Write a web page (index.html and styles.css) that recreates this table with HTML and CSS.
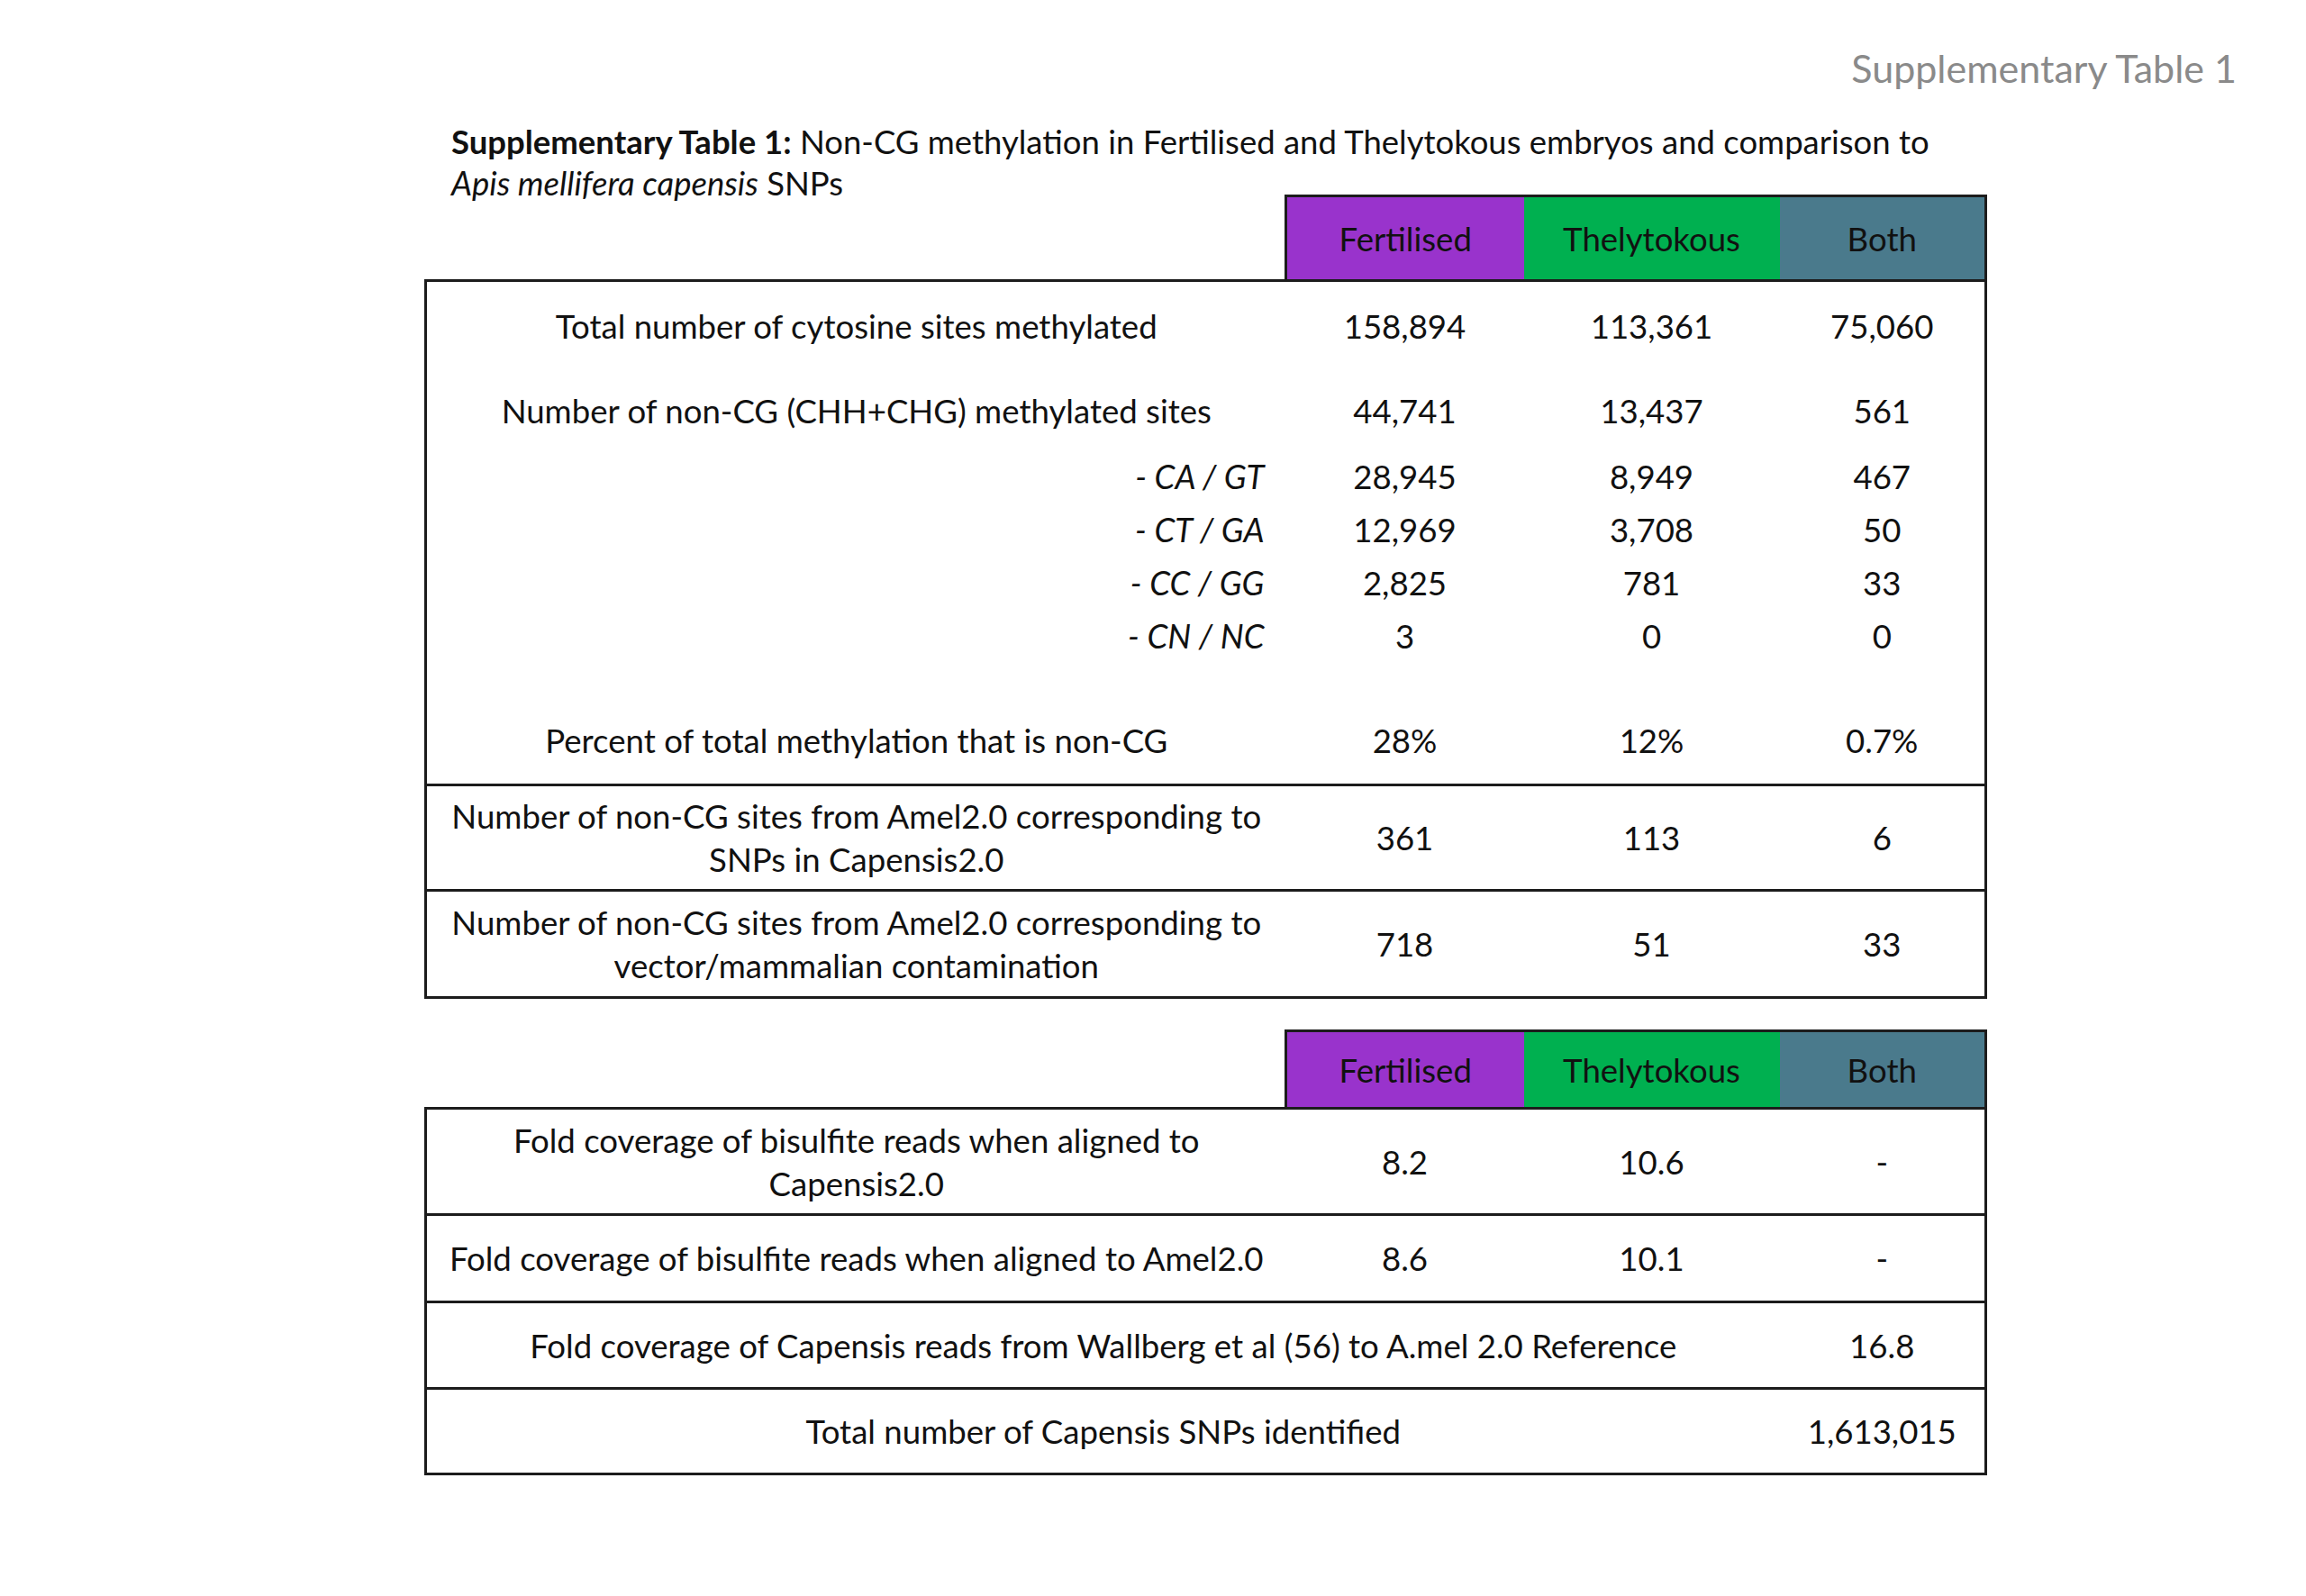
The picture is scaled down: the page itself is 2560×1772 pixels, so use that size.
FILE: index.html
```html
<!DOCTYPE html>
<html lang="en">
<head>
<meta charset="utf-8">
<title>Supplementary Table 1</title>
<link rel="stylesheet" href="styles.css">
</head>
<body>
<div class="slide">
  <div class="slide-title">Supplementary Table 1</div>
  <p class="caption"><b>Supplementary Table 1:</b> Non-CG methylation in Fertilised and Thelytokous embryos and comparison to<br><i>Apis mellifera capensis</i> SNPs</p>

  <table class="data t1">
    <colgroup><col class="c-label"><col class="c-f"><col class="c-t"><col class="c-b"></colgroup>
    <thead>
      <tr class="r-head"><th class="blank"></th><th class="h-f">Fertilised</th><th class="h-t">Thelytokous</th><th class="h-b">Both</th></tr>
    </thead>
    <tbody class="block">
      <tr class="r-a"><td class="lbl">Total number of cytosine sites methylated</td><td>158,894</td><td>113,361</td><td>75,060</td></tr>
      <tr class="r-b"><td class="lbl">Number of non-CG (CHH+CHG) methylated sites</td><td>44,741</td><td>13,437</td><td>561</td></tr>
      <tr class="r-s"><td class="sub">- CA / GT</td><td>28,945</td><td>8,949</td><td>467</td></tr>
      <tr class="r-s"><td class="sub">- CT / GA</td><td>12,969</td><td>3,708</td><td>50</td></tr>
      <tr class="r-s"><td class="sub">- CC / GG</td><td>2,825</td><td>781</td><td>33</td></tr>
      <tr class="r-s"><td class="sub">- CN / NC</td><td>3</td><td>0</td><td>0</td></tr>
      <tr class="r-g"><td class="lbl">Percent of total methylation that is non-CG</td><td>28%</td><td>12%</td><td>0.7%</td></tr>
    </tbody>
    <tbody class="block">
      <tr class="r-2"><td class="lbl">Number of non-CG sites from Amel2.0 corresponding to<br>SNPs in Capensis2.0</td><td>361</td><td>113</td><td>6</td></tr>
    </tbody>
    <tbody class="block">
      <tr class="r-3"><td class="lbl">Number of non-CG sites from Amel2.0 corresponding to<br>vector/mammalian contamination</td><td>718</td><td>51</td><td>33</td></tr>
    </tbody>
  </table>

  <table class="data t2">
    <colgroup><col class="c-label"><col class="c-f"><col class="c-t"><col class="c-b"></colgroup>
    <thead>
      <tr class="r-head2"><th class="blank"></th><th class="h-f">Fertilised</th><th class="h-t">Thelytokous</th><th class="h-b">Both</th></tr>
    </thead>
    <tbody class="block">
      <tr class="r-t1"><td class="lbl">Fold coverage of bisulfite reads when aligned to<br>Capensis2.0</td><td>8.2</td><td>10.6</td><td>-</td></tr>
    </tbody>
    <tbody class="block">
      <tr class="r-t2"><td class="lbl">Fold coverage of bisulfite reads when aligned to Amel2.0</td><td>8.6</td><td>10.1</td><td>-</td></tr>
    </tbody>
    <tbody class="block">
      <tr class="r-t3"><td class="lbl" colspan="3">Fold coverage of Capensis reads from Wallberg et al (56) to A.mel 2.0 Reference</td><td>16.8</td></tr>
    </tbody>
    <tbody class="block">
      <tr class="r-t4"><td class="lbl" colspan="3">Total number of Capensis SNPs identified</td><td>1,613,015</td></tr>
    </tbody>
  </table>
</div>
</body>
</html>
```

FILE: styles.css
```css
html, body {
  margin: 0;
  padding: 0;
  background: #ffffff;
}

body {
  font-family: "Lato", "Open Sans", "Liberation Sans", sans-serif;
  color: #111111;
}

.slide {
  width: 2560px;
  height: 1772px;
  box-sizing: border-box;
  padding: 46px 77px 0 471px;
}

.slide-title {
  text-align: right;
  font-size: 43px;
  line-height: 60px;
  color: #8a8a8a;
}

.caption {
  margin: 28px 0 -10px 30px;
  font-size: 36.5px;
  line-height: 46px;
  color: #111111;
}

.caption b {
  font-weight: 700;
}

.data {
  border-collapse: collapse;
  table-layout: fixed;
  width: 1732px;
  font-size: 36.6px;
  line-height: 48px;
}

.c-label { width: 955px; }
.c-f { width: 264px; }
.c-t { width: 284px; }
.c-b { width: 229px; }

.data th,
.data td {
  padding: 0;
  text-align: center;
  vertical-align: middle;
  font-weight: 400;
}

.data th.blank {
  background: transparent;
}

.data th.h-f {
  background: #9933cc;
  border-top: 3px solid #1c1c1c;
  border-left: 3px solid #1c1c1c;
}

.data th.h-t {
  background: #00b050;
  border-top: 3px solid #1c1c1c;
}

.data th.h-b {
  background: #4a7a8c;
  border-top: 3px solid #1c1c1c;
  border-right: 3px solid #1c1c1c;
}

.block > tr:first-child > td { border-top: 3px solid #1c1c1c; }
.block > tr:last-child > td { border-bottom: 3px solid #1c1c1c; }
.block > tr > td:first-child { border-left: 3px solid #1c1c1c; }
.block > tr > td:last-child { border-right: 3px solid #1c1c1c; }

.data td.sub {
  text-align: right;
  padding-right: 24px;
  font-style: italic;
}

.r-head { height: 94px; }
.r-a { height: 100px; }
.r-b { height: 88px; }
.r-s { height: 59px; }
.r-g { height: 136px; }
.r-g > td { vertical-align: bottom; padding-bottom: 24px; }
.r-2 { height: 117px; }
.r-3 { height: 119px; }

.t2 { margin-top: 34px; }
.r-head2 { height: 86px; }
.r-t1 { height: 118px; }
.r-t2 { height: 97px; }
.r-t3 { height: 96px; }
.r-t4 { height: 95px; }
```
